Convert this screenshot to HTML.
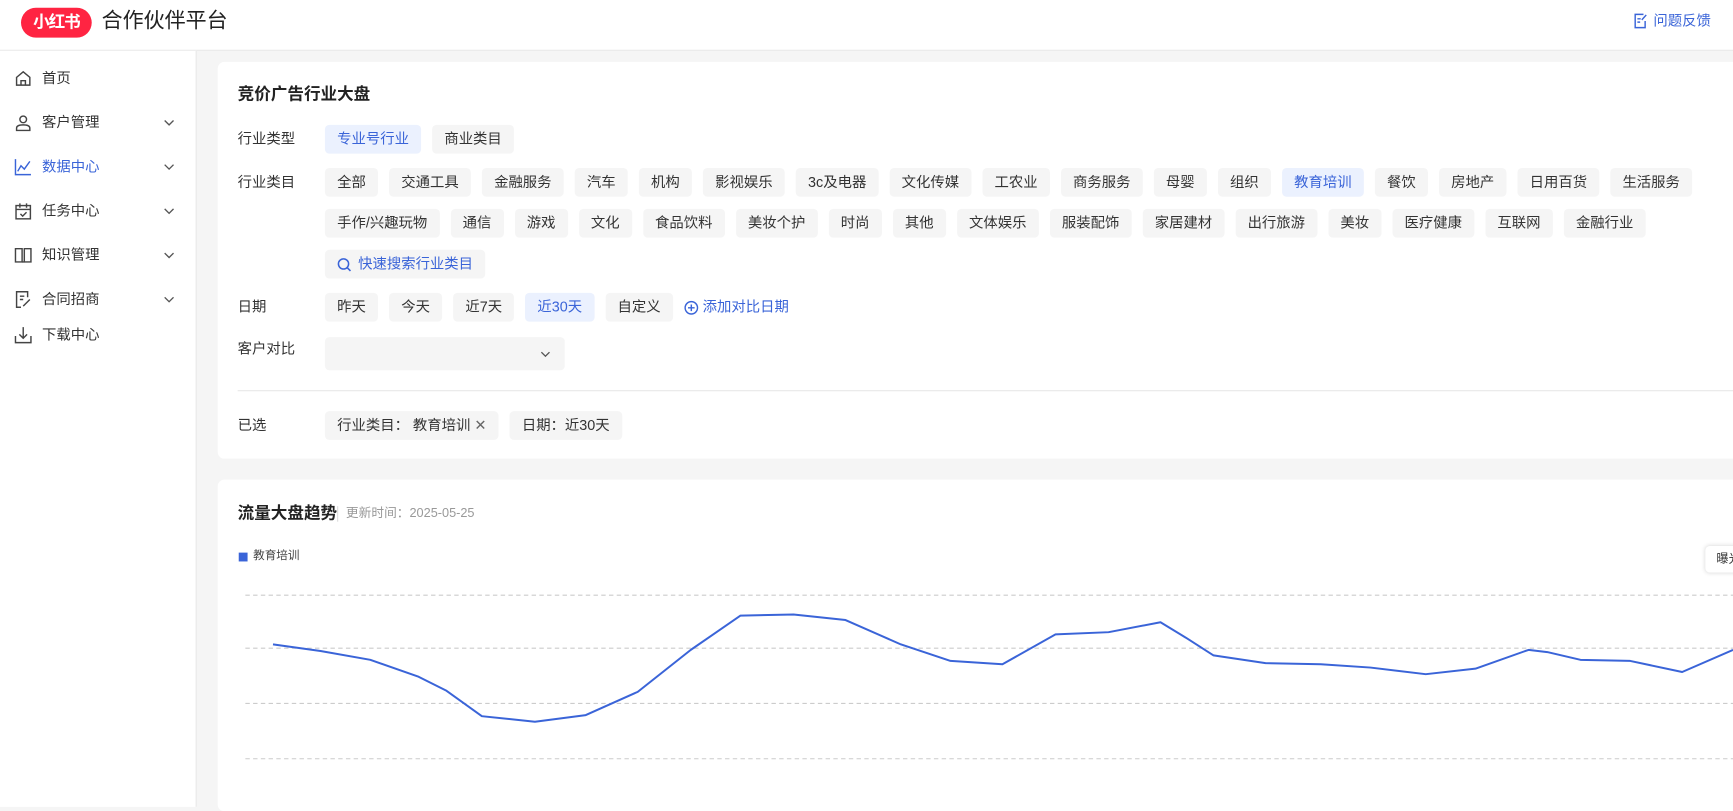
<!DOCTYPE html>
<html><head><meta charset="utf-8">
<style>
html,body{margin:0;padding:0;width:1733px;height:806px;overflow:hidden;background:#f5f5f5;}
#root{position:absolute;left:0;top:0;width:1568px;height:730px;transform:scale(1.10523);transform-origin:0 0;font-family:"Liberation Sans","Noto Sans CJK SC",sans-serif;color:#333;}
.hdr{position:absolute;left:0;top:0;width:1568px;height:45px;background:#fff;border-bottom:1px solid #e8e8e8;}
.logo{position:absolute;left:19px;top:7px;width:64px;height:27px;border-radius:14px;background:#ff2442;color:#fff;font-weight:bold;font-size:15px;line-height:27px;text-align:center;letter-spacing:-1px;}
.ttl{position:absolute;left:92px;top:7px;font-size:19px;color:#222;line-height:26px;}
.fb{position:absolute;right:20px;top:11px;font-size:13px;color:#3a64d8;line-height:16px;display:flex;align-items:center;gap:5px;}
.side{position:absolute;left:0;top:46px;width:177px;height:684px;background:#fff;border-right:1px solid #e8e8e8;}
.mi{position:absolute;left:13px;font-size:13px;color:#333;display:flex;align-items:center;gap:9px;line-height:16px;}
.mi svg{width:16px;height:16px;}
.chev{position:absolute;left:147px;width:12px;height:12px;}
.card{position:absolute;left:197px;width:1380px;background:#fff;border-radius:6px;}
.lbl{position:absolute;left:215px;font-size:13px;color:#333;line-height:16px;}
.tags{position:absolute;left:294px;display:flex;gap:10px;}
.t{height:26px;line-height:26px;padding:0 11px;background:#f5f5f5;border-radius:4px;font-size:13px;color:#333;white-space:nowrap;}
.t.on{background:#ebf1fe;color:#3a64d8;}
.blue{color:#3a64d8;}
</style></head><body><div id="root">
<div class="hdr">
 <div class="logo">小红书</div>
 <div class="ttl">合作伙伴平台</div>
 <div class="fb"><svg width="13" height="14" viewBox="0 0 13 14" fill="none" stroke="#3a64d8" stroke-width="1.3"><path d="M9 1H1.5v12h9V7"/><path d="M3.5 5h3M3.5 8h2.5"/><path d="M11.5 1.5l-4 4.5"/></svg>问题反馈</div>
</div>
<div class="side">
 <div class="mi" style="top:17px"><svg viewBox="0 0 16 16" fill="none" stroke="#444" stroke-width="1.3"><path d="M2 7l6-5 6 5v7H2z"/><path d="M6 14v-4h4v4"/></svg>首页</div>
 <div class="mi" style="top:57px"><svg viewBox="0 0 16 16" fill="none" stroke="#444" stroke-width="1.3"><circle cx="8" cy="5" r="3"/><path d="M2 15v-2c0-2 2-3 6-3s6 1 6 3v2z"/></svg>客户管理</div><svg class="chev" style="top:59px" viewBox="0 0 12 12" fill="none" stroke="#555" stroke-width="1.2"><path d="M2 4l4 4 4-4"/></svg>
 <div class="mi blue" style="top:97px"><svg viewBox="0 0 16 16" fill="none" stroke="#3a64d8" stroke-width="1.3"><path d="M1 1v14h14"/><path d="M3 12l3-5 3 3 5-7"/></svg>数据中心</div><svg class="chev" style="top:99px" viewBox="0 0 12 12" fill="none" stroke="#555" stroke-width="1.2"><path d="M2 4l4 4 4-4"/></svg>
 <div class="mi" style="top:137px"><svg viewBox="0 0 16 16" fill="none" stroke="#444" stroke-width="1.3"><rect x="1.5" y="3" width="13" height="12"/><path d="M1.5 6.5h13M5 1v4M11 1v4M5.5 10.5l2 2 3.5-3.5"/></svg>任务中心</div><svg class="chev" style="top:139px" viewBox="0 0 12 12" fill="none" stroke="#555" stroke-width="1.2"><path d="M2 4l4 4 4-4"/></svg>
 <div class="mi" style="top:177px"><svg viewBox="0 0 16 16" fill="none" stroke="#444" stroke-width="1.3"><path d="M1 2h6v12H1zM9 2h6v12H9z"/><path d="M7 14h2"/></svg>知识管理</div><svg class="chev" style="top:179px" viewBox="0 0 12 12" fill="none" stroke="#555" stroke-width="1.2"><path d="M2 4l4 4 4-4"/></svg>
 <div class="mi" style="top:217px"><svg viewBox="0 0 16 16" fill="none" stroke="#444" stroke-width="1.3"><path d="M12 6V1H2v14h4"/><path d="M5 5h4M5 8h3M8 14l6-6"/></svg>合同招商</div><svg class="chev" style="top:219px" viewBox="0 0 12 12" fill="none" stroke="#555" stroke-width="1.2"><path d="M2 4l4 4 4-4"/></svg>
 <div class="mi" style="top:249px"><svg viewBox="0 0 16 16" fill="none" stroke="#444" stroke-width="1.3"><path d="M1 9v6h14V9M8 1v10M4.5 7.5L8 11l3.5-3.5"/></svg>下载中心</div>
</div>

<div class="card" style="top:56px;height:359px"></div>
<div class="card" style="top:434px;height:300px"></div>

<div style="position:absolute;left:215px;top:76px;font-size:15px;font-weight:bold;color:#222;line-height:20px">竞价广告行业大盘</div>

<div class="lbl" style="top:118px">行业类型</div>
<div class="tags" style="top:113px"><div class="t on">专业号行业</div><div class="t">商业类目</div></div>

<div class="lbl" style="top:157px">行业类目</div>
<div class="tags" style="top:152px"><div class="t">全部</div><div class="t">交通工具</div><div class="t">金融服务</div><div class="t">汽车</div><div class="t">机构</div><div class="t">影视娱乐</div><div class="t">3c及电器</div><div class="t">文化传媒</div><div class="t">工农业</div><div class="t">商务服务</div><div class="t">母婴</div><div class="t">组织</div><div class="t on">教育培训</div><div class="t">餐饮</div><div class="t">房地产</div><div class="t">日用百货</div><div class="t">生活服务</div></div>
<div class="tags" style="top:189px"><div class="t">手作/兴趣玩物</div><div class="t">通信</div><div class="t">游戏</div><div class="t">文化</div><div class="t">食品饮料</div><div class="t">美妆个护</div><div class="t">时尚</div><div class="t">其他</div><div class="t">文体娱乐</div><div class="t">服装配饰</div><div class="t">家居建材</div><div class="t">出行旅游</div><div class="t">美妆</div><div class="t">医疗健康</div><div class="t">互联网</div><div class="t">金融行业</div></div>
<div class="tags" style="top:226px"><div class="t blue" style="display:flex;align-items:center;gap:6px"><svg width="13" height="13" viewBox="0 0 13 13" fill="none" stroke="#3a64d8" stroke-width="1.4"><circle cx="5.8" cy="5.8" r="4.6"/><path d="M9.3 9.3l2.8 2.8"/></svg>快速搜索行业类目</div></div>

<div class="lbl" style="top:270px">日期</div>
<div class="tags" style="top:265px"><div class="t">昨天</div><div class="t">今天</div><div class="t">近7天</div><div class="t on">近30天</div><div class="t">自定义</div><div class="blue" style="font-size:13px;line-height:26px;display:flex;align-items:center;gap:4px"><svg width="13" height="13" viewBox="0 0 13 13" fill="none" stroke="#3a64d8" stroke-width="1.3"><circle cx="6.5" cy="6.5" r="5.6"/><path d="M6.5 3.5v6M3.5 6.5h6"/></svg>添加对比日期</div></div>

<div class="lbl" style="top:308px">客户对比</div>
<div style="position:absolute;left:294px;top:305px;width:217px;height:30px;background:#f5f5f5;border-radius:4px"><svg style="position:absolute;right:12px;top:10px" width="11" height="11" viewBox="0 0 12 12" fill="none" stroke="#555" stroke-width="1.3"><path d="M2 4l4 4 4-4"/></svg></div>

<div style="position:absolute;left:215px;top:353px;width:1353px;height:1px;background:#e8e8e8"></div>

<div class="lbl" style="top:377px">已选</div>
<div class="tags" style="top:372px"><div class="t">行业类目：&nbsp;教育培训 <span style="color:#666">✕</span></div><div class="t">日期：近30天</div></div>

<div style="position:absolute;left:215px;top:455px;font-size:15px;font-weight:bold;color:#222;line-height:20px">流量大盘趋势</div>
<div style="position:absolute;left:305px;top:458px;width:1px;height:14px;background:#ddd"></div>
<div style="position:absolute;left:313px;top:457px;font-size:11.5px;color:#999;line-height:16px">更新时间：2025-05-25</div>

<div style="position:absolute;left:216px;top:500px;width:8px;height:8px;background:#3a64d8"></div>
<div style="position:absolute;left:229px;top:496px;font-size:10.5px;color:#444;line-height:15px">教育培训</div>
<div style="position:absolute;left:1543px;top:494px;width:40px;height:24px;background:#fff;border-radius:4px;box-shadow:0 0 4px rgba(0,0,0,.15);font-size:11px;line-height:24px;padding-left:10px;color:#333">曝光</div>

<svg style="position:absolute;left:0;top:0" width="1568" height="730">
 <g stroke="#ccc" stroke-dasharray="4 3" stroke-width="1">
  <line x1="222" y1="538.5" x2="1568" y2="538.5"/><line x1="222" y1="586.5" x2="1568" y2="586.5"/><line x1="222" y1="636.5" x2="1568" y2="636.5"/><line x1="222" y1="686.5" x2="1568" y2="686.5"/>
 </g>
 <polyline fill="none" stroke="#3a64d8" stroke-width="1.8" stroke-linejoin="round" points="247,583 290,589 335,597 378,612 404,625 436,648 484,653 530,647 577,626 625,588 670,557 718,556 765,561 815,583 860,598 907,601 955,574 1003,572 1050,563 1073,577 1098,593 1145,600 1195,601 1240,604 1290,610 1335,605 1383,588 1400,590 1430,597 1475,598 1522,608 1568,588"/>
</svg>
</div></body></html>
